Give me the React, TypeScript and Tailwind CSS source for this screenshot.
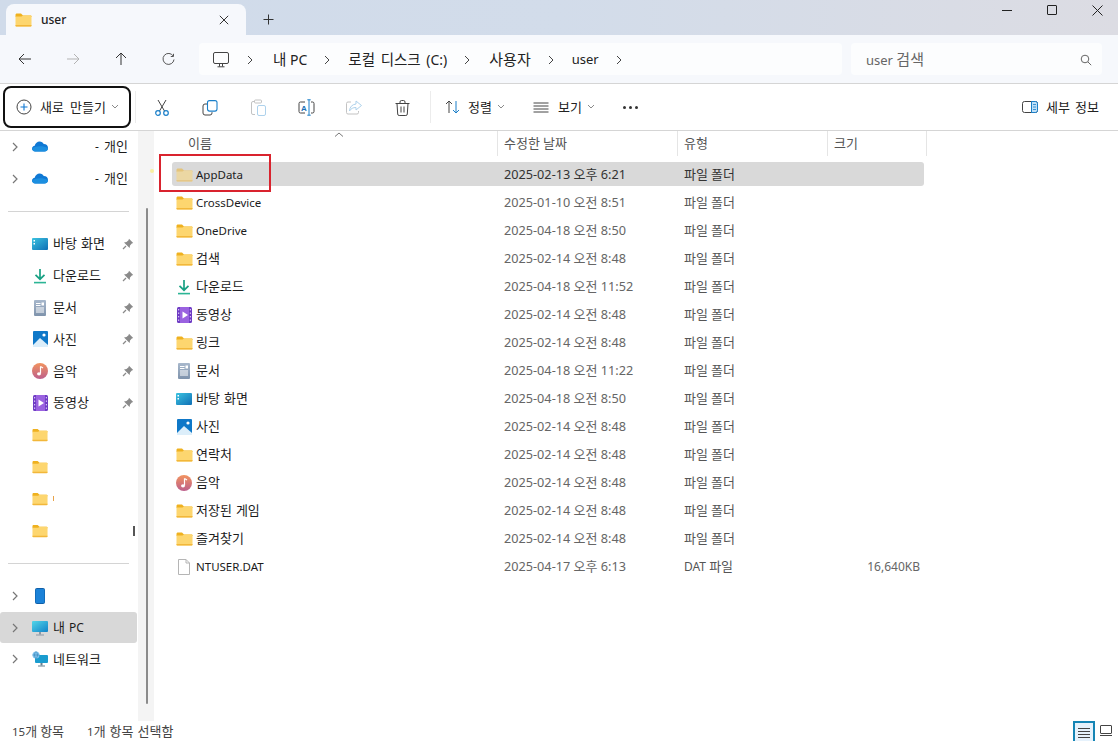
import React from "react";

const FONT = "font-['Noto_Sans','Noto_Sans_CJK_KR',sans-serif]";

/* Hangul in the reference's font runs wider than its Latin: split runs so each gets its own size. */
function T({ s, h = "text-[13px]" }: { s: string; h?: string }) {
  return (
    <>
      {s.split(/([가-힣]+)/).map((p, i) =>
        /[가-힣]/.test(p) ? (
          <span key={i} className={h}>
            {p}
          </span>
        ) : (
          p
        )
      )}
    </>
  );
}

function Folder({ faded = false, className = "" }: { faded?: boolean; className?: string }) {
  return (
    <svg width="17" height="14" viewBox="0 0 17 14" className={className} style={{ opacity: faded ? 0.5 : 1 }}>
      <path d="M0.5 2C0.5 1 1 .5 2 .5h4l2 2h7.500c.6 0 1 .4 1 1V4H.5z" fill="#efb11f" />
      <path d="M.5 3.500h6l1.500-1h7.500c.6 0 1 .4 1 1v9c0 .6-.4 1-1 1h-14c-.6 0-1-.4-1-1z" fill="#fdd66f" />
      <path d="M.5 12h16v.6c0 .6-.4 1-1 1h-14c-.6 0-1-.4-1-1z" fill="#f2b73a" />
    </svg>
  );
}
function Download() {
  return (
    <svg width="14" height="16" viewBox="0 0 14 16">
      <path d="M7 1v10M2.500 6.800 7 11.200l4.500-4.400" stroke="#19a184" strokeWidth="1.700" fill="none" />
      <path d="M1 14.600h12" stroke="#2bb595" strokeWidth="1.600" />
    </svg>
  );
}
function Video() {
  return (
    <svg width="15" height="16" viewBox="0 0 15 16">
      <rect width="15" height="16" rx="1.500" fill="#6f3cc4" />
      <rect x="3" y="0" width="9" height="16" fill="#9a62e0" />
      <path d="M5.500 4.500v7l5.500-3.500z" fill="#fff" />
      {[2, 5.5, 9, 12.5].map((y) => (
        <React.Fragment key={y}>
          <rect x="1" y={y} width="1.200" height="1.400" fill="#d8c2f5" />
          <rect x="12.800" y={y} width="1.200" height="1.400" fill="#d8c2f5" />
        </React.Fragment>
      ))}
    </svg>
  );
}
function Doc() {
  return (
    <svg width="12" height="16" viewBox="0 0 12 16">
      <defs>
        <linearGradient id="docg" x1="0" y1="0" x2="0" y2="1">
          <stop offset="0" stopColor="#a8b8cc" />
          <stop offset="1" stopColor="#7f93ac" />
        </linearGradient>
      </defs>
      <rect width="12" height="16" rx="1" fill="url(#docg)" />
      <path d="M2 3.500h4.500M2 5.500h4.500M2 8h8M2 10h8M2 12h8" stroke="#fff" strokeWidth="1" />
      <rect x="7.500" y="2.500" width="2.500" height="3" fill="#fff" />
    </svg>
  );
}
function Desktop() {
  return (
    <svg width="16" height="12" viewBox="0 0 16 12">
      <defs>
        <linearGradient id="deskg" x1="0" y1="0" x2="1" y2="1">
          <stop offset="0" stopColor="#3cc3e0" />
          <stop offset="1" stopColor="#0f6fb5" />
        </linearGradient>
      </defs>
      <rect width="16" height="12" rx="1" fill="url(#deskg)" />
      <rect x="1.500" y="2" width="1.500" height="1.500" fill="#fff" />
      <rect x="1.500" y="5" width="1.500" height="1.500" fill="#fff" />
    </svg>
  );
}
function Photo() {
  return (
    <svg width="15" height="16" viewBox="0 0 15 16">
      <rect width="15" height="16" fill="#0f78c8" rx="1" />
      <path d="M0 14 7 7l8 7v2H0z" fill="#dceefa" />
      <circle cx="11" cy="4" r="1.600" fill="#fff" />
    </svg>
  );
}
function Music() {
  return (
    <svg width="16" height="16" viewBox="0 0 16 16">
      <defs>
        <linearGradient id="musg" x1="0" y1="0" x2="0" y2="1">
          <stop offset="0" stopColor="#f2935f" />
          <stop offset="1" stopColor="#bc5f8c" />
        </linearGradient>
      </defs>
      <circle cx="8" cy="8" r="8" fill="url(#musg)" />
      <path d="M8.500 3.500v7" stroke="#fff" strokeWidth="1.200" />
      <path d="M8.500 3.500 11 5" stroke="#fff" strokeWidth="1.200" />
      <ellipse cx="7" cy="10.800" rx="2" ry="1.600" fill="#fff" />
    </svg>
  );
}
function FileIcon() {
  return (
    <svg width="12" height="16" viewBox="0 0 12 16">
      <path d="M.5.500h7.500l3.500 3.500v11.500H.5z" fill="#fff" stroke="#b5b5b5" />
      <path d="M8 .500V4h3.500" fill="none" stroke="#b5b5b5" />
    </svg>
  );
}
function Cloud() {
  return (
    <svg width="16" height="11" viewBox="0 0 16 11">
      <path d="M3.200 10.500C1.400 10.500 0 9.300 0 7.600c0-1.500 1.200-2.700 2.700-2.800C3.300 2.300 5.300.500 7.700.500c1.800 0 3.300 1 4 2.500 2.500-.1 4.300 1.600 4.300 3.900 0 2-1.500 3.600-3.700 3.600z" fill="#0f78d4" />
      <path d="M3.200 10.500C1.400 10.500 0 9.300 0 7.600c4-3 11-3 16-.4 0 2-1.500 3.300-3.700 3.300z" fill="#1c8fe0" />
    </svg>
  );
}
function Phone() {
  return (
    <svg width="10" height="16" viewBox="0 0 10 16">
      <rect width="10" height="16" rx="2" fill="#0f5fa8" />
      <rect x=".600" y="1" width="8.800" height="14" rx="1" fill="#1b82d8" />
    </svg>
  );
}
function Monitor() {
  return (
    <svg width="16" height="16" viewBox="0 0 16 16">
      <defs>
        <linearGradient id="mong" x1="0" y1="0" x2="1" y2="1">
          <stop offset="0" stopColor="#53d6e8" />
          <stop offset="1" stopColor="#1183c9" />
        </linearGradient>
      </defs>
      <rect y="1" width="16" height="11" rx="1" fill="url(#mong)" />
      <rect x="7" y="12" width="2" height="2.500" fill="#8b98a5" />
      <rect x="4" y="14.500" width="8" height="1" fill="#8b98a5" />
    </svg>
  );
}
function Network() {
  return (
    <svg width="16" height="16" viewBox="0 0 16 16">
      <rect x="3" y="4" width="13" height="8" rx="1" fill="#1a9ccf" />
      <rect x="8.500" y="12" width="2" height="2.500" fill="#67808f" />
      <rect x="6" y="14.500" width="7" height="1" fill="#67808f" />
      <circle cx="4" cy="4" r="3.500" fill="#7cc2ee" />
      <path d="M.5 4h7M4 .5c-2 2-2 5 0 7M4 .5c2 2 2 5 0 7" stroke="#3b7fb0" strokeWidth=".6" fill="none" />
    </svg>
  );
}
function Chevron() {
  return (
    <svg width="8" height="12" viewBox="0 0 8 12">
      <path d="M2 2l4 4-4 4" stroke="#777" strokeWidth="1.200" fill="none" />
    </svg>
  );
}
function Crumb() {
  return (
    <svg width="8" height="10" viewBox="0 0 8 10">
      <path d="M2 1l4 4-4 4" stroke="#444" strokeWidth="1" fill="none" />
    </svg>
  );
}
function Caret() {
  return (
    <svg width="8" height="6" viewBox="0 0 8 6">
      <path d="M1 1l3 3 3-3" stroke="#8a8a8a" strokeWidth="1" fill="none" />
    </svg>
  );
}
function Pin() {
  return (
    <svg width="12" height="12" viewBox="0 0 12 12">
      <path d="M7 .8 11.200 5 9.800 5.500 8 7.500 7.600 10 2 4.400l2.500-.4 2-1.800z" fill="#8a8a8a" />
      <path d="M4 8 1 11" stroke="#8a8a8a" strokeWidth="1.200" />
    </svg>
  );
}

function NavRow({
  chevron,
  icon,
  label,
  pin,
  selected,
  right,
  children,
}: {
  chevron?: boolean;
  icon?: React.ReactNode;
  label?: string;
  pin?: boolean;
  selected?: boolean;
  right?: string;
  children?: React.ReactNode;
}) {
  return (
    <div className={`flex h-[31.9px] items-center rounded-[3px] pl-[11px] ${selected ? "bg-[#d8d8d8]" : ""}`}>
      <span className="flex w-[21px] shrink-0 items-center">{chevron && <Chevron />}</span>
      <span className="flex w-[16px] shrink-0 items-center justify-center">{icon}</span>
      <span className="ml-[5px] flex-1 whitespace-nowrap text-[12px] text-[#1c1c1c] [word-spacing:1px]">{label && <T s={label} />}</span>
      {right && (
        <span className="mr-[9px] whitespace-nowrap text-[12px] text-[#1c1c1c] [word-spacing:2px]">
          <T s={right} />
        </span>
      )}
      {pin && (
        <span className="mr-[3px]">
          <Pin />
        </span>
      )}
      {children}
    </div>
  );
}

const files: [React.ReactNode, string, string, string, string?][] = [
  [<Folder />, "CrossDevice", "2025-01-10 오전 8:51", "파일 폴더"],
  [<Folder />, "OneDrive", "2025-04-18 오전 8:50", "파일 폴더"],
  [<Folder />, "검색", "2025-02-14 오전 8:48", "파일 폴더"],
  [<Download />, "다운로드", "2025-04-18 오전 11:52", "파일 폴더"],
  [<Video />, "동영상", "2025-02-14 오전 8:48", "파일 폴더"],
  [<Folder />, "링크", "2025-02-14 오전 8:48", "파일 폴더"],
  [<Doc />, "문서", "2025-04-18 오전 11:22", "파일 폴더"],
  [<Desktop />, "바탕 화면", "2025-04-18 오전 8:50", "파일 폴더"],
  [<Photo />, "사진", "2025-02-14 오전 8:48", "파일 폴더"],
  [<Folder />, "연락처", "2025-02-14 오전 8:48", "파일 폴더"],
  [<Music />, "음악", "2025-02-14 오전 8:48", "파일 폴더"],
  [<Folder />, "저장된 게임", "2025-02-14 오전 8:48", "파일 폴더"],
  [<Folder />, "즐겨찾기", "2025-02-14 오전 8:48", "파일 폴더"],
  [<FileIcon />, "NTUSER.DAT", "2025-04-17 오후 6:13", "DAT 파일", "16,640KB"],
];

function FileRow({
  icon,
  name,
  date,
  type,
  size,
  selected,
}: {
  icon: React.ReactNode;
  name: string;
  date: string;
  type: string;
  size?: string;
  selected?: boolean;
}) {
  const dim = selected ? "text-[#333]" : "text-[#666]";
  return (
    <div className={`mb-[4px] flex h-[24px] w-[752px] items-center rounded-[3px] pt-[1px] ${selected ? "bg-[#d9d9d9]" : ""}`}>
      <span className="flex w-[24px] shrink-0 items-center justify-center">{icon}</span>
      <span className="w-[308px] shrink-0 whitespace-nowrap text-[11.500px] text-[#1c1c1c] [word-spacing:1px]">
        <T s={name} />
      </span>
      <span className={`w-[180px] shrink-0 whitespace-nowrap text-[12.700px] ${dim}`}>
        <T s={date} />
      </span>
      <span className={`w-[150px] shrink-0 whitespace-nowrap text-[12px] ${selected ? "text-[#333]" : "text-[#555]"}`}>
        <T s={type} />
      </span>
      <span className="w-[86px] shrink-0 whitespace-nowrap text-right text-[12px] text-[#666]">{size}</span>
    </div>
  );
}

function ToolBtn({ children }: { children: React.ReactNode }) {
  return <span className="flex w-[48px] shrink-0 items-center justify-center">{children}</span>;
}

export default function App() {
  return (
    <div className={`${FONT} flex h-[741px] w-[1118px] flex-col overflow-hidden bg-white`}>
      {/* title bar */}
      <div className="flex h-[35px] shrink-0 items-end bg-gradient-to-r from-[#d0dbea] via-[#d2dcea] to-[#dcdce3] pl-[6px]">
        <div className="flex h-[31px] w-[240px] items-center rounded-t-[8px] bg-[#f6f8fc] pl-[9px] pr-[17px]">
          <Folder />
          <span className="ml-[9px] flex-1 text-[12px] font-medium text-[#222]">user</span>
          <svg width="10" height="10" viewBox="0 0 10 10">
            <path d="M.8.800l8.400 8.400M9.200.800.800 9.200" stroke="#333" strokeWidth="1" />
          </svg>
        </div>
        <div className="ml-[17px] flex h-[31px] w-[12px] items-center">
          <svg width="11" height="11" viewBox="0 0 11 11">
            <path d="M5.500.500v10M.5 5.500h10" stroke="#333" strokeWidth="1" />
          </svg>
        </div>
        <div className="mb-[19.500px] ml-auto flex items-center gap-[35px] pr-[15px]">
          <span className="h-px w-[10px] bg-[#222]" />
          <span className="h-[10px] w-[10px] rounded-[1px] border border-[#222]" />
          <svg width="11" height="11" viewBox="0 0 11 11">
            <path d="M.5.500l10 10M10.500.500l-10 10" stroke="#222" strokeWidth="1" />
          </svg>
        </div>
      </div>

      {/* nav bar */}
      <div className="flex h-[49px] shrink-0 items-center border-b border-[#d5d5d5] bg-[#f6f8fc] pl-[18px] pr-[16px]">
        <svg width="14" height="12" viewBox="0 0 14 12">
          <path d="M13 6H1M6 1 1 6l5 5" stroke="#333" strokeWidth="1" fill="none" />
        </svg>
        <svg width="14" height="12" viewBox="0 0 14 12" className="ml-[34px]">
          <path d="M1 6h12M8 1l5 5-5 5" stroke="#b3b3b3" strokeWidth="1" fill="none" />
        </svg>
        <svg width="12" height="14" viewBox="0 0 12 14" className="ml-[35px]">
          <path d="M6 13V1M1 6l5-5 5 5" stroke="#333" strokeWidth="1" fill="none" />
        </svg>
        <svg width="13" height="13" viewBox="0 0 13 13" className="ml-[35px]">
          <path d="M11.200 3A5.500 5.500 0 1 0 12 6.500" stroke="#555" strokeWidth="1" fill="none" />
          <path d="M11.500.800V3.500H8.800" stroke="#555" strokeWidth="1" fill="none" />
        </svg>
        <div className="ml-[24px] flex h-[32px] w-[643px] items-center rounded-[4px] bg-[#fcfdfe] pl-[14px] pt-[1px] text-[13px] text-[#222]">
          <svg width="16" height="16" viewBox="0 0 16 16">
            <rect x=".5" y=".5" width="15" height="11" rx="1.500" fill="none" stroke="#444" />
            <path d="M6.500 12v2.500M9.500 12v2.500M4.500 14.800h7" stroke="#444" strokeWidth="1" />
          </svg>
          <span className="ml-[17px]"><Crumb /></span>
          <span className="ml-[19px] whitespace-nowrap text-[14px]"><T s="내 PC" h="text-[14.500px]" /></span>
          <span className="ml-[16px]"><Crumb /></span>
          <span className="ml-[17px] whitespace-nowrap text-[14px] [word-spacing:2px]"><T s="로컬 디스크 (C:)" h="text-[14.500px]" /></span>
          <span className="ml-[16px]"><Crumb /></span>
          <span className="ml-[18px] whitespace-nowrap"><T s="사용자" h="text-[15px]" /></span>
          <span className="ml-[16px]"><Crumb /></span>
          <span className="ml-[17px] whitespace-nowrap">user</span>
          <span className="ml-[16px]"><Crumb /></span>
        </div>
        <div className="ml-[9px] flex h-[32px] flex-1 items-center justify-between rounded-[4px] bg-[#fcfdfe] pl-[15px] pr-[10px] pt-[1px] text-[13px] text-[#666]">
          <span><T s="user 검색" h="text-[15px]" /></span>
          <svg width="12" height="12" viewBox="0 0 12 12">
            <circle cx="5" cy="5" r="3.800" fill="none" stroke="#666" />
            <path d="M8 8l3.200 3.200" stroke="#666" />
          </svg>
        </div>
      </div>

      {/* toolbar */}
      <div className="flex h-[47px] shrink-0 items-center border-b border-[#d5d5d5] bg-white pl-[3px] pr-[19px]">
        <div className="flex h-[42px] w-[128px] items-center rounded-[8px] border-2 border-[#111] pl-[11px]">
          <svg width="16" height="16" viewBox="0 0 16 16">
            <circle cx="8" cy="8" r="7" fill="none" stroke="#444" />
            <path d="M8 4.500v7M4.500 8h7" stroke="#0f78d4" strokeWidth="1.100" />
          </svg>
          <span className="ml-[8px] whitespace-nowrap pt-[1px] text-[12px] text-[#222] [word-spacing:3px]"><T s="새로 만들기" /></span>
          <span className="ml-[5px]"><Caret /></span>
        </div>
        <div className="ml-[4px] h-[32px] w-px bg-[#ececec]" />
        <div className="ml-[2px] flex items-center pt-[1px]">
          <ToolBtn>
            <svg width="16" height="17" viewBox="0 0 16 17">
              <path d="M4 1 10.500 12M12 1 5.500 12" stroke="#444" strokeWidth="1" />
              <circle cx="4" cy="14" r="2.300" fill="none" stroke="#1a7fc9" strokeWidth="1.200" />
              <circle cx="12" cy="14" r="2.300" fill="none" stroke="#1a7fc9" strokeWidth="1.200" />
            </svg>
          </ToolBtn>
          <ToolBtn>
            <svg width="16" height="16" viewBox="0 0 16 16">
              <rect x="5.500" y=".6" width="9.500" height="10.500" rx="2" fill="none" stroke="#1a7fc9" strokeWidth="1.100" />
              <path d="M5 4H3a2 2 0 0 0-2 2v7a2 2 0 0 0 2 2h5a2 2 0 0 0 2-2v-.8" fill="none" stroke="#444" />
            </svg>
          </ToolBtn>
          <ToolBtn>
            <svg width="15" height="17" viewBox="0 0 15 17" opacity="0.35">
              <path d="M3.500 2.500H2a1.500 1.500 0 0 0-1.500 1.500v10A1.500 1.500 0 0 0 2 15.500h2" fill="none" stroke="#555" />
              <rect x="3.500" y="1" width="7" height="3" rx="1" fill="none" stroke="#555" />
              <rect x="6.500" y="6.500" width="8" height="10" rx="1.500" fill="none" stroke="#1a7fc9" />
            </svg>
          </ToolBtn>
          <ToolBtn>
            <svg width="17" height="17" viewBox="0 0 17 17">
              <path d="M7 3H2.500A1.500 1.500 0 0 0 1 4.500v8A1.500 1.500 0 0 0 2.500 14H7M13 3h1.500A1.500 1.500 0 0 1 16 4.500v8a1.500 1.500 0 0 1-1.500 1.500H13" fill="none" stroke="#444" />
              <path d="M9.300.8h3.400M9.300 16.200h3.400M11 .8v15.400" stroke="#1a7fc9" fill="none" />
              <text x="3" y="11.500" fontSize="8" fontWeight="600" fill="#1a6fb5" fontFamily="Liberation Sans">A</text>
            </svg>
          </ToolBtn>
          <ToolBtn>
            <svg width="16" height="15" viewBox="0 0 16 15" opacity="0.35">
              <path d="M10 1l5.500 4.500L10 10V7.500C7 7.500 5 8.500 3.500 11c.2-4 2.500-6.500 6.500-7z" fill="none" stroke="#1a7fc9" />
              <path d="M5 2H2a1.500 1.500 0 0 0-1.500 1.500v9A1.500 1.500 0 0 0 2 14h9a1.500 1.500 0 0 0 1.500-1.500V11" fill="none" stroke="#555" />
            </svg>
          </ToolBtn>
          <ToolBtn>
            <svg width="15" height="16" viewBox="0 0 15 16">
              <path d="M.5 3.500h14M5 3.500V2A1.500 1.500 0 0 1 6.500.5h2A1.500 1.500 0 0 1 10 2v1.500M2 3.500l.7 10.500a1.500 1.500 0 0 0 1.500 1.500h6.600a1.500 1.500 0 0 0 1.500-1.500L13 3.500" fill="none" stroke="#444" />
              <path d="M6 6.500v6M9 6.500v6" stroke="#444" />
            </svg>
          </ToolBtn>
        </div>
        <div className="ml-[4px] h-[32px] w-px bg-[#ececec]" />
        <svg width="15" height="14" viewBox="0 0 15 14" className="ml-[14px]">
          <path d="M4 13V1M1 4l3-3 3 3" stroke="#444" fill="none" />
          <path d="M11 1v12M8 10l3 3 3-3" stroke="#1a7fc9" fill="none" />
        </svg>
        <span className="ml-[8px] pt-[1px] text-[12px] text-[#222]"><T s="정렬" /></span>
        <span className="ml-[5px]"><Caret /></span>
        <svg width="16" height="11" viewBox="0 0 16 11" className="ml-[28px]">
          <path d="M.5 1h15M.5 4h15M.5 7h15M.5 10h15" stroke="#444" strokeWidth="1" />
        </svg>
        <span className="ml-[9px] pt-[1px] text-[12px] text-[#222]"><T s="보기" /></span>
        <span className="ml-[5px]"><Caret /></span>
        <span className="ml-[28px] flex gap-[3px]">
          <span className="h-[3px] w-[3px] rounded-full bg-[#333]" />
          <span className="h-[3px] w-[3px] rounded-full bg-[#333]" />
          <span className="h-[3px] w-[3px] rounded-full bg-[#333]" />
        </span>
        <svg width="16" height="12" viewBox="0 0 16 12" className="ml-auto">
          <rect x=".5" y=".5" width="15" height="11" rx="2" fill="none" stroke="#444" />
          <path d="M9.500.5h4a2 2 0 0 1 2 2v7a2 2 0 0 1-2 2h-4z" fill="#bfe0f7" stroke="#1a7fc9" />
          <path d="M11 3.500h3M11 6h3M11 8.500h3" stroke="#1a7fc9" strokeWidth=".8" />
        </svg>
        <span className="ml-[8px] whitespace-nowrap pt-[1px] text-[12px] text-[#222] [word-spacing:2px]"><T s="세부 정보" /></span>
      </div>

      {/* body */}
      <div className="flex min-h-0 flex-1">
        <div className="w-[137px] shrink-0">
          <NavRow chevron icon={<Cloud />} right="- 개인" />
          <NavRow chevron icon={<Cloud />} right="- 개인" />
          <div className="my-[16px] ml-[8px] h-px w-[121px] bg-[#d4d4d4]" />
          <NavRow icon={<Desktop />} label="바탕 화면" pin />
          <NavRow icon={<Download />} label="다운로드" pin />
          <NavRow icon={<Doc />} label="문서" pin />
          <NavRow icon={<Photo />} label="사진" pin />
          <NavRow icon={<Music />} label="음악" pin />
          <NavRow icon={<Video />} label="동영상" pin />
          <NavRow icon={<Folder />} />
          <NavRow icon={<Folder />} />
          <NavRow icon={<Folder />}>
            <span className="mr-[83px] h-[5px] w-px bg-[#e8a34a]" />
          </NavRow>
          <NavRow icon={<Folder />}>
            <span className="mr-[2px] h-[10px] w-[2px] bg-[#555]" />
          </NavRow>
          <div className="my-[16px] ml-[8px] h-px w-[121px] bg-[#d4d4d4]" />
          <NavRow chevron icon={<Phone />} />
          <NavRow chevron icon={<Monitor />} label="내 PC" selected />
          <NavRow chevron icon={<Network />} label="네트워크" />
        </div>

        {/* scroll track */}
        <div className="relative ml-[1px] flex h-[590px] w-[16px] shrink-0 justify-center bg-[#f4f4f4] pt-[77px]">
          <div className="ml-[1px] h-[496px] w-[2px] rounded-full bg-[#8b8b8b]" />
          <span className="absolute right-0 top-[38px] h-[4px] w-[4px] rounded-full bg-[#f8f0a0]" />
        </div>

        {/* file list */}
        <div className="relative flex-1 pl-[18px]">
          <div className="flex h-[25px] text-[12px] text-[#555]">
            <span className="w-[325px] pl-[16px] leading-[25px]"><T s="이름" /></span>
            <span className="w-[180px] border-l border-[#e5e5e5] pl-[6px] leading-[25px]"><T s="수정한 날짜" /></span>
            <span className="w-[150px] border-l border-[#e5e5e5] pl-[6px] leading-[25px]"><T s="유형" /></span>
            <span className="w-[100px] border-x border-[#e5e5e5] pl-[6px] leading-[25px]"><T s="크기" /></span>
          </div>
          <div className="pt-[6px]">
            <FileRow icon={<Folder faded />} name="AppData" date="2025-02-13 오후 6:21" type="파일 폴더" selected />
            {files.map(([icon, name, date, type, size]) => (
              <FileRow key={name} icon={icon} name={name} date={date} type={type} size={size} />
            ))}
          </div>
          {/* sort caret */}
          <svg width="10" height="5" viewBox="0 0 10 5" className="absolute left-[180px] top-[1px]">
            <path d="M1 4.500l4-3.500 4 3.500" stroke="#777" fill="none" />
          </svg>
          {/* annotation */}
          <div className="absolute left-[5px] top-[23px] h-[38px] w-[112px] border-2 border-[#d9232e]" />
        </div>
      </div>

      {/* status bar */}
      <div className="flex h-[20px] shrink-0 items-center bg-white pl-[12px] pr-[6px] pt-[2px] text-[11.500px] text-[#444]">
        <span><T s="15개 항목" /></span>
        <span className="ml-[23px] [word-spacing:1px]"><T s="1개 항목 선택함" /></span>
        <div className="mt-[-2px] ml-auto flex items-start self-start">
          <span className="flex h-[20px] w-[22px] flex-col items-center gap-[2px] border-x-2 border-t-2 border-[#1585b5] bg-[#e6f2fc] pt-[5px]">
            <span className="h-px w-[12px] bg-[#444]" />
            <span className="h-px w-[12px] bg-[#444]" />
            <span className="h-px w-[12px] bg-[#444]" />
            <span className="h-px w-[12px] bg-[#444]" />
          </span>
          <span className="ml-[5px] mt-[4px] flex flex-col gap-[1px]">
            <span className="h-[9px] w-[12px] rounded-[1px] border border-[#444]" />
            <span className="h-px w-[12px] bg-[#444]" />
          </span>
        </div>
      </div>
    </div>
  );
}
